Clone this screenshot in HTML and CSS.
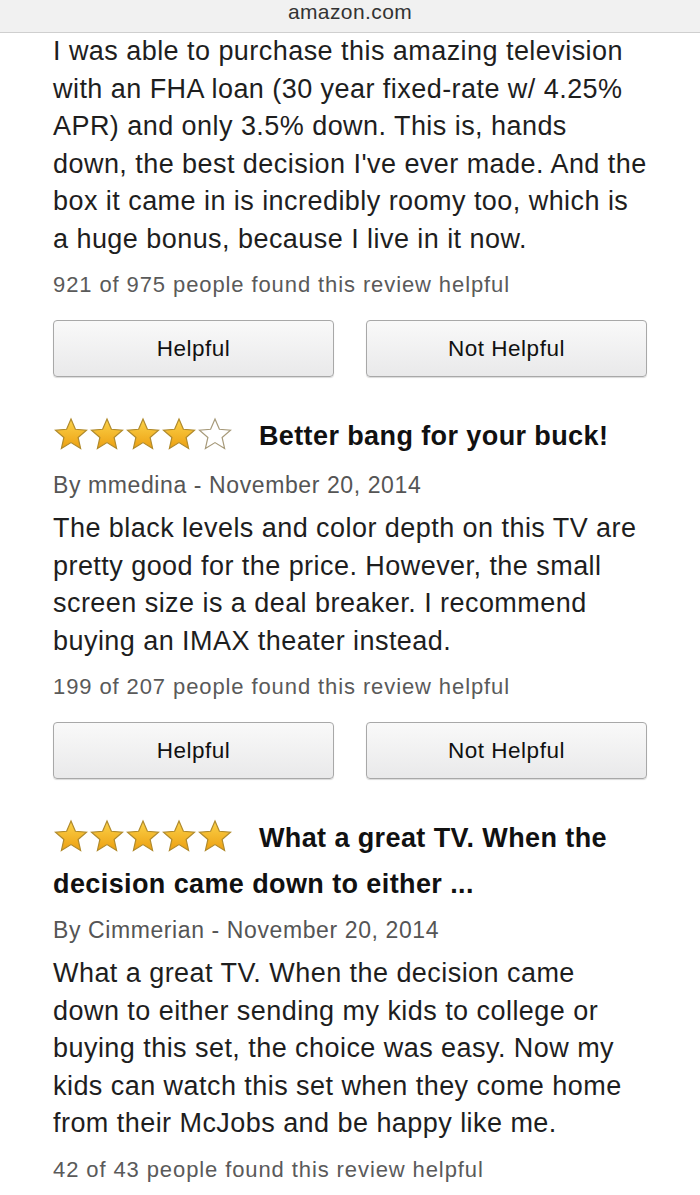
FILE: index.html
```html
<!DOCTYPE html>
<html lang="en">
<head>
  <meta charset="UTF-8" />
  <meta name="viewport" content="width=device-width, initial-scale=1.0"/>
  <title>amazon.com</title>
  <link rel="stylesheet" href="styles.css">
</head>
<body>

  <svg width="0" height="0" class="defs">
    <defs>
      <linearGradient id="gold" x1="0" y1="0" x2="0" y2="1">
        <stop offset="0" stop-color="#fcd34a"/>
        <stop offset="1" stop-color="#eca012"/>
      </linearGradient>
      <symbol id="star" viewBox="0 0 36 34">
        <path d="M18 2 L22.4 12.3 L33.5 13.2 L25.1 20.5 L27.6 31.4 L18 25.6 L8.4 31.4 L10.9 20.5 L2.5 13.2 L13.6 12.3 Z"/>
      </symbol>
    </defs>
  </svg>

  <header class="urlbar">amazon.com</header>

  <div class="reviews">

    <div class="review">
      <p class="text">I was able to purchase this amazing television with an FHA loan (30 year fixed-rate w/ 4.25% APR) and only 3.5% down. This is, hands down, the best decision I've ever made. And the box it came in is incredibly roomy too, which is a huge bonus, because I live in it now.</p>
      <p class="count">921 of 975 people found this review helpful</p>
      <div class="buttons">
        <button class="btn">Helpful</button>
        <button class="btn">Not Helpful</button>
      </div>
    </div>

    <div class="review">
      <div class="head">
        <span class="stars">
          <svg class="star on"><use href="#star"/></svg><svg class="star on"><use href="#star"/></svg><svg class="star on"><use href="#star"/></svg><svg class="star on"><use href="#star"/></svg><svg class="star off"><use href="#star"/></svg>
        </span>
        <span class="title">Better bang for your buck!</span>
      </div>
      <p class="by">By mmedina - November 20, 2014</p>
      <p class="text">The black levels and color depth on this TV are pretty good for the price. However, the small screen size is a deal breaker. I recommend buying an IMAX theater instead.</p>
      <p class="count">199 of 207 people found this review helpful</p>
      <div class="buttons">
        <button class="btn">Helpful</button>
        <button class="btn">Not Helpful</button>
      </div>
    </div>

    <div class="review">
      <div class="head">
        <span class="stars">
          <svg class="star on"><use href="#star"/></svg><svg class="star on"><use href="#star"/></svg><svg class="star on"><use href="#star"/></svg><svg class="star on"><use href="#star"/></svg><svg class="star on"><use href="#star"/></svg>
        </span>
        <span class="title">What a great TV. When the decision came down to either ...</span>
      </div>
      <p class="by">By Cimmerian - November 20, 2014</p>
      <p class="text">What a great TV. When the decision came down to either sending my kids to college or buying this set, the choice was easy. Now my kids can watch this set when they come home from their McJobs and be happy like me.</p>
      <p class="count">42 of 43 people found this review helpful</p>
    </div>

  </div>

</body>
</html>
```

FILE: styles.css
```css
* { box-sizing: border-box; }

body {
  margin: 0;
  font-family: 'Liberation Sans', Arial, sans-serif;
  background: #fff;
  color: #222;
}

.defs {
  position: absolute;
}

.urlbar {
  height: 33px;
  background: #f1f1f1;
  border-bottom: 1px solid #cfcfcf;
  text-align: center;
  font-size: 21px;
  letter-spacing: 0.4px;
  line-height: 24px;
  color: #333;
}

.reviews {
  padding: 0 53px;
}

.review p {
  margin: 0;
}

.text {
  font-size: 27px;
  letter-spacing: 0.45px;
  line-height: 37.5px;
  color: #1e1e1e;
}

.count {
  font-size: 22px;
  letter-spacing: 0.9px;
  color: #5a5a5a;
  margin-top: 15px !important;
  line-height: 24px;
}

.buttons {
  display: flex;
  gap: 32px;
  margin-top: 23px;
  margin-bottom: 38px;
}

.btn {
  flex: 1;
  height: 57px;
  font-family: inherit;
  font-size: 22.5px;
  letter-spacing: 0.5px;
  color: #111;
  background: linear-gradient(#f9f9f9, #e9e9ea);
  border: 1px solid #a8a8a8;
  border-radius: 4px;
  box-shadow: 0 1px 1px rgba(0, 0, 0, 0.15);
}

.head {
  font-size: 27px;
  letter-spacing: 0.4px;
  line-height: 43px;
}

.stars {
  display: inline-block;
  margin-right: 18px;
  margin-bottom: 10px;
  vertical-align: -6px;
  line-height: 0;
  letter-spacing: 0;
}

.star {
  width: 36px;
  height: 34px;
}

.star.on {
  fill: url(#gold);
  stroke: #b08a2c;
  stroke-width: 1.2;
}

.star.off {
  fill: #fff;
  stroke: #a79a7a;
  stroke-width: 1.2;
}

.title {
  font-weight: bold;
  color: #111;
}

.by {
  font-size: 23px;
  letter-spacing: 0.6px;
  color: #555;
  line-height: 24px;
  margin-top: 12px !important;
  margin-bottom: 13px !important;
}
```
